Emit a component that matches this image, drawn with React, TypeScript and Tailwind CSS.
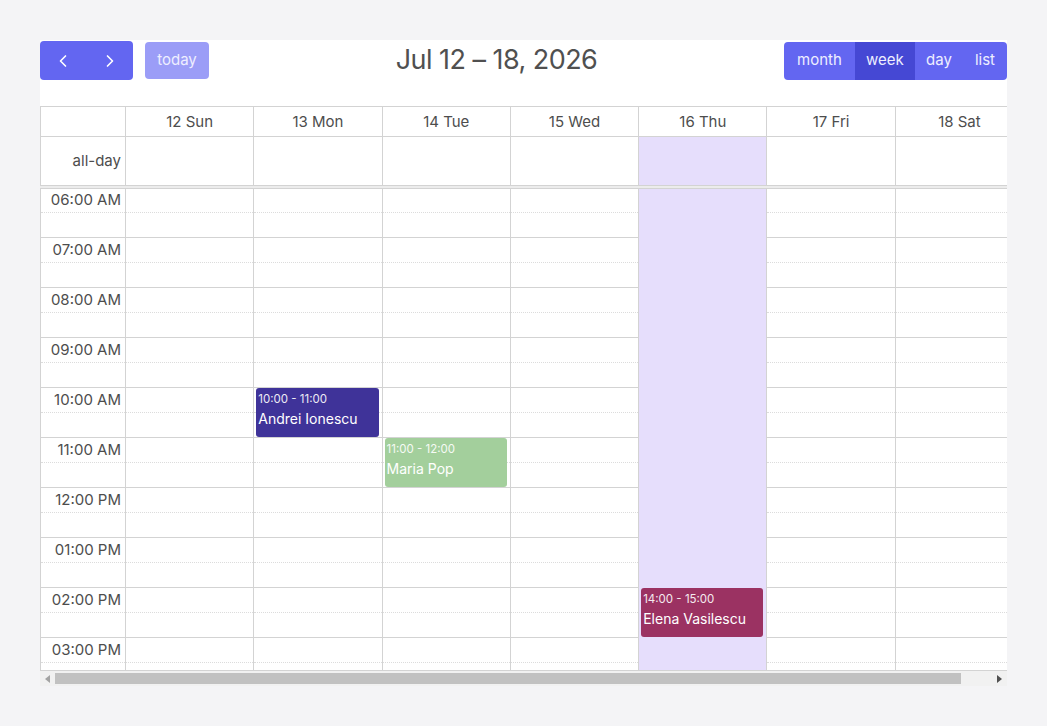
import { ChevronLeft, ChevronRight } from 'lucide-react'

const days = ['12 Sun', '13 Mon', '14 Tue', '15 Wed', '16 Thu', '17 Fri', '18 Sat']
const hours = ['06:00 AM', '07:00 AM', '08:00 AM', '09:00 AM', '10:00 AM', '11:00 AM', '12:00 PM', '01:00 PM', '02:00 PM', '03:00 PM']
const TODAY = 4

type CalEvent = { day: number; top: number; time: string; title: string; color: string }

const events: CalEvent[] = [
  { day: 1, top: 199, time: '10:00 - 11:00', title: 'Andrei Ionescu', color: 'bg-[#3f3399]' },
  { day: 2, top: 249, time: '11:00 - 12:00', title: 'Maria Pop', color: 'bg-[#a3cf9c]' },
  { day: 4, top: 399, time: '14:00 - 15:00', title: 'Elena Vasilescu', color: 'bg-[#9b3262]' },
]

const cols = 'grid grid-cols-[85px_repeat(7,128.3px)]'

export default function App() {
  return (
    <div className="min-h-[726px] bg-[#f4f4f6] pt-10 font-['Inter','Noto_Sans',sans-serif] text-[#4d4d4d]">
      <div className="mx-10 h-[646px] bg-white">
        <div className="mb-[26px] flex h-10 items-center justify-between pt-px">
          <div className="flex items-center gap-3">
            <div className="flex h-[39px] w-[93px] overflow-hidden rounded bg-[#6366f1] text-white">
              <button className="flex flex-1 items-center justify-center">
                <ChevronLeft className="h-5 w-5" strokeWidth={2} />
              </button>
              <button className="flex flex-1 items-center justify-center">
                <ChevronRight className="h-5 w-5" strokeWidth={2} />
              </button>
            </div>
            <button className="h-[37px] w-16 rounded bg-[#9b9df7] text-[15px] text-[#eef]">today</button>
          </div>
          <h2 className="text-[27px] tracking-[-0.02em] text-[#505050]">Jul 12 – 18, 2026</h2>
          <div className="flex h-[38px] overflow-hidden rounded bg-[#6366f1] text-[15px] text-[#eef]">
            <button className="w-[71px]">month</button>
            <button className="w-[60px] bg-[#4548d4]">week</button>
            <button className="w-12">day</button>
            <button className="w-11">list</button>
          </div>
        </div>

        <div className="overflow-hidden">
          <div className="w-[1000px]">
            <div className={`${cols} h-[31px] border-y border-[#d3d3d3] text-[15px]`}>
              <div className="border-l border-[#d3d3d3]" />
              {days.map((d) => (
                <div key={d} className="flex items-center justify-center border-l border-[#d3d3d3] pt-px">
                  {d}
                </div>
              ))}
            </div>

            <div className={`${cols} h-[49px] border-b border-[#d3d3d3] text-[15px]`}>
              <div className="flex items-center justify-end border-l border-[#d3d3d3] pr-1">all-day</div>
              {days.map((d, i) => (
                <div
                  key={d}
                  className={`border-l border-[#d3d3d3] ${i === TODAY ? 'bg-[#e6defc]' : ''}`}
                />
              ))}
            </div>

            <div className="h-[3px] border-b border-[#d3d3d3] bg-[#ececec]" />

            <div className={`${cols} h-[482px] overflow-hidden border-b border-[#d3d3d3]`}>
              <div className="border-l border-[#d3d3d3]">
                {hours.map((h, i) => (
                  <div key={h}>
                    <div
                      className={`flex items-center justify-end border-b border-dotted border-[#dcdcdc] pr-1 text-[15px] ${
                        i === 0 ? 'h-6' : 'h-[25px]'
                      }`}
                    >
                      {h}
                    </div>
                    <div className="h-[25px] border-b border-[#d3d3d3]" />
                  </div>
                ))}
              </div>
              {days.map((d, di) => (
                <div key={d} className="relative border-l border-[#d3d3d3]">
                  {hours.map((h, i) => (
                    <div key={h}>
                      <div className={`border-b border-dotted border-[#dcdcdc] ${i === 0 ? 'h-6' : 'h-[25px]'}`} />
                      <div className="h-[25px] border-b border-[#d3d3d3]" />
                    </div>
                  ))}
                  {di === TODAY && <div className="absolute inset-0 bg-[#e6defc]" />}
                  {events
                    .filter((e) => e.day === di)
                    .map((e) => (
                      <div
                        key={e.title}
                        className={`absolute left-[2px] right-[3px] h-[49px] rounded-[3px] px-[2px] pt-[3px] text-white ${e.color}`}
                        style={{ top: e.top }}
                      >
                        <div className="text-[11.5px] leading-[16px] opacity-90">{e.time}</div>
                        <div className="mt-[3px] text-[14px] leading-[18px]">{e.title}</div>
                      </div>
                    ))}
                </div>
              ))}
            </div>
          </div>
        </div>

        {/* horizontal scrollbar */}
        <div className="flex h-[15px] items-center bg-[#f1f1f1]">
          <div className="flex w-[15px] items-center justify-center">
            <svg width="5" height="8" viewBox="0 0 5 8">
              <path d="M5 0 L0 4 L5 8 Z" fill="#a3a3a3" />
            </svg>
          </div>
          <div className="flex-1">
            <div className="h-[11px] w-[906px] bg-[#c1c1c1]" />
          </div>
          <div className="flex w-[15px] items-center justify-center">
            <svg width="5" height="8" viewBox="0 0 5 8">
              <path d="M0 0 L5 4 L0 8 Z" fill="#505050" />
            </svg>
          </div>
        </div>
      </div>
    </div>
  )
}
